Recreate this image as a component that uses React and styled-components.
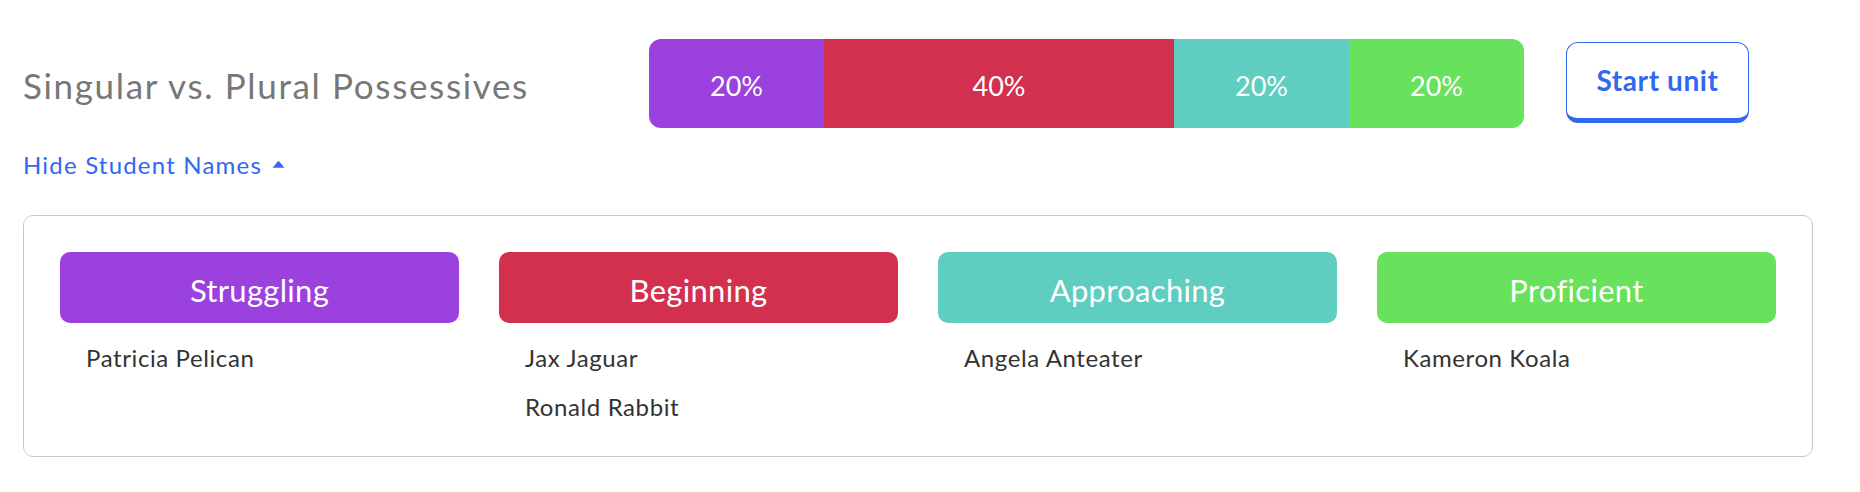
import React from 'react';
import styled, { createGlobalStyle } from 'styled-components';

const GlobalStyle = createGlobalStyle`
  body {
    margin: 0;
    background: #fff;
    font-family: Lato, "Open Sans", sans-serif;
  }
`;

const segments = [
  { pct: 20, color: '#9b41dd' },
  { pct: 40, color: '#d33050' },
  { pct: 20, color: '#5fcdbf' },
  { pct: 20, color: '#68e15d' },
];

const groups = [
  { label: 'Struggling', color: '#9b41dd', names: ['Patricia Pelican'] },
  { label: 'Beginning', color: '#d33050', names: ['Jax Jaguar', 'Ronald Rabbit'] },
  { label: 'Approaching', color: '#5fcdbf', names: ['Angela Anteater'] },
  { label: 'Proficient', color: '#68e15d', names: ['Kameron Koala'] },
];

function App() {
  return (
    <Page>
      <GlobalStyle />
      <Header>
        <Title>Singular vs. Plural Possessives</Title>
        <Bar>
          {segments.map((s, i) => (
            <Segment key={i} $pct={s.pct} $color={s.color}>
              {s.pct}%
            </Segment>
          ))}
        </Bar>
        <StartButton>Start unit</StartButton>
      </Header>
      <Toggle>
        Hide Student Names
        <Caret viewBox="0 0 12 7">
          <path d="M0.5 7 L6 0.5 L11.5 7 Z" fill="currentColor" />
        </Caret>
      </Toggle>
      <Panel>
        {groups.map((g) => (
          <Column key={g.label}>
            <Pill $color={g.color}>{g.label}</Pill>
            <NameList>
              {g.names.map((n) => (
                <Name key={n}>{n}</Name>
              ))}
            </NameList>
          </Column>
        ))}
      </Panel>
    </Page>
  );
}

const Page = styled.div`
  padding: 39px 0 0 23px;
  width: 1837px;
`;

const Header = styled.div`
  display: flex;
  align-items: center;
  height: 89px;
`;

const Title = styled.h1`
  width: 626px;
  flex-shrink: 0;
  margin: 2px 0 0;
  font-size: 35px;
  letter-spacing: 1.65px;
  font-weight: 400;
  color: #777;
`;

const Bar = styled.div`
  display: flex;
  width: 875px;
  height: 89px;
  border-radius: 12px;
  overflow: hidden;
`;

const Segment = styled.div`
  flex: ${(p) => p.$pct} 0 0;
  background: ${(p) => p.$color};
  display: flex;
  align-items: center;
  justify-content: center;
  color: #fff;
  font-size: 27px;
  padding-top: 4px;
`;

const StartButton = styled.button`
  margin-left: 42px;
  margin-top: -3px;
  width: 183px;
  height: 81px;
  background: #fff;
  border: 1px solid #3068f0;
  border-bottom-width: 5px;
  border-radius: 12px;
  color: #3068f0;
  font-family: Lato, sans-serif;
  font-weight: 700;
  font-size: 28px;
  letter-spacing: 0.6px;
  padding: 0;
`;

const Toggle = styled.div`
  display: flex;
  align-items: center;
  margin-top: 22px;
  height: 28px;
  color: #3068f0;
  font-size: 24px;
  letter-spacing: 1.2px;
`;

const Caret = styled.svg`
  width: 13px;
  height: 8px;
  margin-left: 10px;
`;

const Panel = styled.div`
  margin-top: 37px;
  width: 1716px;
  padding: 36px 36px 25px;
  border: 1px solid #c8c8c8;
  border-radius: 10px;
  display: grid;
  grid-template-columns: repeat(4, 1fr);
  column-gap: 40px;
`;

const Column = styled.div`
  display: flex;
  flex-direction: column;
`;

const Pill = styled.div`
  height: 71px;
  border-radius: 10px;
  background: ${(p) => p.$color};
  color: #fff;
  display: flex;
  align-items: center;
  justify-content: center;
  font-size: 31px;
  letter-spacing: 0.3px;
  padding-top: 5px;
  box-sizing: border-box;
`;

const NameList = styled.div`
  margin-top: 10px;
  padding-left: 26px;
`;

const Name = styled.div`
  line-height: 49px;
  font-size: 24px;
  letter-spacing: 0.6px;
  color: #333;
`;

export default App;
